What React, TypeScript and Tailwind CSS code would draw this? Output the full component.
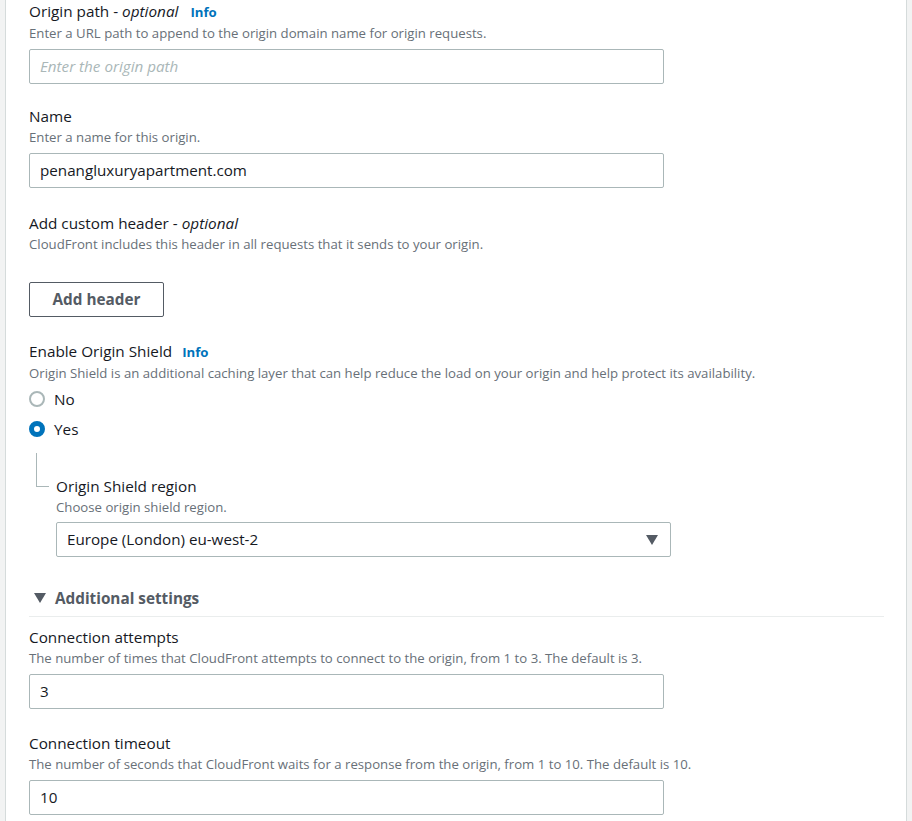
import type { ReactNode } from "react";

function Label({ children }: { children: ReactNode }) {
  return <div className="text-[15.3px] leading-[22px] text-[#16191f]">{children}</div>;
}

function Desc({ children }: { children: ReactNode }) {
  return <div className="mt-px text-[13.2px] leading-[18px] text-[#687078]">{children}</div>;
}

function Info() {
  return <span className="ml-[10px] text-[13.2px] font-bold not-italic text-[#0073bb]">Info</span>;
}

function TextInput({ value, placeholder }: { value?: string; placeholder?: string }) {
  return (
    <div className="mt-[7px] flex h-[35px] w-[635px] items-center rounded-[2px] border border-[#aab7b8] bg-white px-[10px] text-[15.2px]">
      {value ? (
        <span className="text-[#16191f]">{value}</span>
      ) : (
        <span className="italic text-[#aab7b8]">{placeholder}</span>
      )}
    </div>
  );
}

function Radio({ label, checked }: { label: string; checked?: boolean }) {
  return (
    <div className="flex h-[30px] items-center gap-[9px]">
      {checked ? (
        <span className="h-[16px] w-[16px] rounded-full border-[5px] border-[#0073bb] bg-white" />
      ) : (
        <span className="h-[16px] w-[16px] rounded-full border-2 border-[#aab7b8] bg-white" />
      )}
      <span className="text-[15.3px] text-[#16191f]">{label}</span>
    </div>
  );
}

export default function App() {
  return (
    <div className="min-h-[821px] bg-[#f2f3f3] px-[5px] font-['Open_Sans',sans-serif]">
      <div className="min-h-[821px] border-x border-[#d5dbdb] bg-white pl-[23px] pr-[22px]">
        <section>
          <Label>
            Origin path - <i className="pr-[2px]">optional</i>
            <Info />
          </Label>
          <Desc>Enter a URL path to append to the origin domain name for origin requests.</Desc>
          <TextInput placeholder="Enter the origin path" />
        </section>

        <section className="mt-[21px]">
          <Label>Name</Label>
          <Desc>Enter a name for this origin.</Desc>
          <TextInput value="penangluxuryapartment.com" />
        </section>

        <section className="mt-[24px]">
          <Label>
            Add custom header - <i>optional</i>
          </Label>
          <Desc>CloudFront includes this header in all requests that it sends to your origin.</Desc>
          <button className="mt-[29px] h-[35px] w-[135px] rounded-[2px] border border-[#545b64] bg-white text-[15.3px] font-bold text-[#545b64]">
            Add header
          </button>
        </section>

        <section className="mt-[23px]">
          <Label>
            Enable Origin Shield
            <Info />
          </Label>
          <Desc>
            Origin Shield is an additional caching layer that can help reduce the load on your origin and help protect its
            availability.
          </Desc>
          <div className="mt-[2px]">
            <Radio label="No" />
            <Radio label="Yes" checked />
          </div>

          <div className="mt-[9px] flex">
            <div className="ml-[7px] h-[34px] w-[13px] border-b border-l border-[#aab7b8]" />
            <div className="ml-[7px] pt-[22px]">
              <Label>Origin Shield region</Label>
              <Desc>Choose origin shield region.</Desc>
              <div className="mt-[6px] flex h-[35px] w-[615px] items-center justify-between rounded-[2px] border border-[#aab7b8] bg-white pl-[10px] pr-[12px] text-[15.2px] text-[#16191f]">
                <span>Europe (London) eu-west-2</span>
                <svg width="12" height="10" viewBox="0 0 12 10">
                  <path d="M0 0 H12 L6 10 Z" fill="#545b64" />
                </svg>
              </div>
            </div>
          </div>
        </section>

        <section className="mt-[30px]">
          <div className="flex items-center gap-[9px] pl-[5px] pb-[6px]">
            <svg width="12" height="10" viewBox="0 0 12 10">
              <path d="M0 0 H12 L6 10 Z" fill="#545b64" />
            </svg>
            <span className="text-[15.3px] font-bold text-[#545b64]">Additional settings</span>
          </div>
          <div className="border-t border-[#eaeded]" />
        </section>

        <section className="mt-[9px]">
          <Label>Connection attempts</Label>
          <Desc>The number of times that CloudFront attempts to connect to the origin, from 1 to 3. The default is 3.</Desc>
          <TextInput value="3" />
        </section>

        <section className="mt-[23px]">
          <Label>Connection timeout</Label>
          <Desc>The number of seconds that CloudFront waits for a response from the origin, from 1 to 10. The default is 10.</Desc>
          <TextInput value="10" />
        </section>
      </div>
    </div>
  );
}
